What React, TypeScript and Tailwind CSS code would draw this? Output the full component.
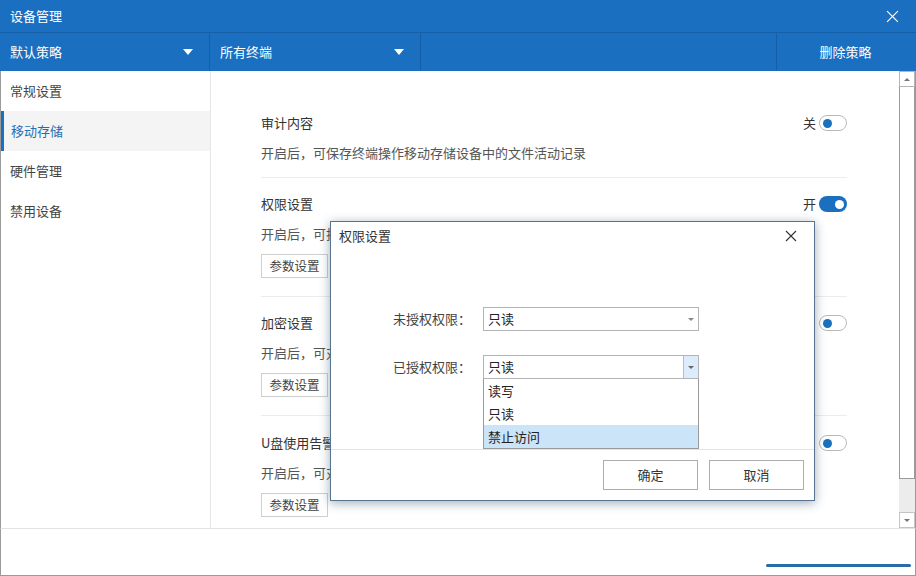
import React from "react";

const NAV = ["常规设置", "移动存储", "硬件管理", "禁用设备"];

const SECTIONS = [
  { title: "审计内容", desc: "开启后，可保存终端操作移动存储设备中的文件活动记录", on: false, label: "关", button: false },
  { title: "权限设置", desc: "开启后，可指定终端对移动存储设备的读写权限", on: true, label: "开", button: true },
  { title: "加密设置", desc: "开启后，可对移动存储设备中的文件进行加密", on: false, label: "", button: true },
  { title: "U盘使用告警", desc: "开启后，可对终端使用U盘的行为进行告警", on: false, label: "", button: true },
];

function Caret({ className }: { className?: string }) {
  return (
    <svg width="10" height="6" viewBox="0 0 10 6" className={className}>
      <path d="M0 0h10L5 6z" fill="currentColor" />
    </svg>
  );
}

function Cross({ size, className }: { size: number; className?: string }) {
  return (
    <svg width={size} height={size} viewBox="0 0 12 12" className={className}>
      <path d="M1 1l10 10M11 1L1 11" stroke="currentColor" strokeWidth="1.1" />
    </svg>
  );
}

function Toggle({ on }: { on: boolean }) {
  return on ? (
    <span className="flex h-[16px] w-[28px] items-center justify-end rounded-full bg-[#1a6fbf] pr-[3px]">
      <span className="h-[9px] w-[9px] rounded-full bg-white" />
    </span>
  ) : (
    <span className="flex h-[16px] w-[28px] items-center rounded-full border border-[#b9b9b9] bg-white pl-[3px]">
      <span className="h-[9px] w-[9px] rounded-full bg-[#1a6fbf]" />
    </span>
  );
}

function Select({ open }: { open?: boolean }) {
  return (
    <div className="flex h-[24px] w-[216px] items-center border border-[#b4b4b4] bg-white">
      <span className="flex-1 pl-[4px] text-[13px] text-[#222]">只读</span>
      {open ? (
        <span className="flex h-full w-[15px] items-center justify-center border-l border-[#9ec3e6] bg-[#dcecfc] text-[#666]">
          <svg width="6" height="3" viewBox="0 0 6 3"><path d="M0 0h6L3 3z" fill="currentColor" /></svg>
        </span>
      ) : (
        <span className="flex h-full w-[15px] items-center justify-center text-[#888]">
          <svg width="6" height="3" viewBox="0 0 6 3"><path d="M0 0h6L3 3z" fill="currentColor" /></svg>
        </span>
      )}
    </div>
  );
}

export default function App() {
  return (
    <div
      className="relative flex h-[576px] w-[916px] flex-col overflow-hidden bg-white text-[13px] text-[#333]"
      style={{ fontFamily: '"Noto Sans CJK SC", "Noto Sans", sans-serif' }}
    >
      {/* title bar */}
      <div className="flex h-[33px] items-center justify-between border-b border-[#155ea8] bg-[#1a6fc0] pl-[10px] pr-[17px] text-white">
        <span className="text-[13px]">设备管理</span>
        <Cross size={13} className="text-white" />
      </div>

      {/* toolbar */}
      <div className="flex h-[38px] items-center bg-[#1a6fc0] text-[13px] text-white">
        <div className="flex h-full w-[210px] items-center justify-between border-r border-[#155ea8] pl-[10px] pr-[16px]">
          <span>默认策略</span>
          <Caret className="text-white" />
        </div>
        <div className="flex h-full w-[211px] items-center justify-between border-r border-[#155ea8] pl-[10px] pr-[16px]">
          <span>所有终端</span>
          <Caret className="text-white" />
        </div>
        <div className="h-full w-[356px] border-r border-[#155ea8]" />
        <div className="flex h-full flex-1 items-center justify-center pr-[2px]">删除策略</div>
      </div>

      {/* body */}
      <div className="flex h-[457px] border-x border-[#9a9a9a]">
        <div className="w-[210px] border-r border-[#e6e6e6]">
          {NAV.map((n) => {
            const active = n === "移动存储";
            return (
              <div
                key={n}
                className={
                  active
                    ? "flex h-[40px] items-center border-l-[3px] border-[#1a6fbf] bg-[#f4f4f4] pb-[1px] pl-[7px] text-[#1f6fb5]"
                    : "flex h-[40px] items-center pb-[1px] pl-[9px] text-[#444]"
                }
              >
                {n}
              </div>
            );
          })}
        </div>

        <div className="flex-1 pl-[50px] pr-[52px] pt-[26px]">
          {SECTIONS.map((s, i) => (
            <div
              key={s.title}
              className={
                i === 0
                  ? "border-b border-[#ececec] pb-[14px] pt-[16px]"
                  : i === 3
                    ? "pt-[17px]"
                    : "border-b border-[#ececec] pb-[18px] pt-[16px]"
              }
            >
              <div className="flex h-[20px] items-center justify-between">
                <span className="text-[#333]">{s.title}</span>
                <span className="flex items-center gap-[3px]">
                  {s.label && <span className="text-[#333]">{s.label}</span>}
                  <Toggle on={s.on} />
                </span>
              </div>
              <div className="mt-[10px] flex h-[20px] items-center text-[#555]">{s.desc}</div>
              {s.button && (
                <div className="mt-[10px] flex h-[24px] w-[67px] items-center justify-center border border-[#cfcfcf] bg-white text-[12.5px] text-[#444]">
                  参数设置
                </div>
              )}
            </div>
          ))}
        </div>

        {/* scrollbar */}
        <div className="flex w-[16px] flex-col bg-white">
          <div className="flex h-[16px] items-center justify-center border border-[#b5b5b5] text-[#777]">
            <svg width="6" height="3" viewBox="0 0 6 3"><path d="M0 3h6L3 0z" fill="currentColor" /></svg>
          </div>
          <div className="h-[392px] border-x border-b border-[#9a9a9a] bg-white" />
          <div className="flex-1 bg-[#ececec]" />
          <div className="flex h-[16px] items-center justify-center border border-[#c4c4c4] text-[#777]">
            <svg width="6" height="3" viewBox="0 0 6 3"><path d="M0 0h6L3 3z" fill="currentColor" /></svg>
          </div>
        </div>
      </div>

      {/* footer */}
      <div className="flex flex-1 flex-col justify-end border-x border-b border-t border-[#9a9a9a] border-t-[#e3e3e3] pb-[8px] pr-[4px]">
        <div className="ml-auto h-[3px] w-[145px] rounded-sm bg-[#2a6ca8]" />
      </div>

      {/* dialog */}
      <div className="absolute left-[330px] top-[221px] flex h-[280px] w-[485px] flex-col border border-[#56738f] bg-white shadow-[0_2px_10px_rgba(40,70,100,0.45)]">
        <div className="flex h-[30px] items-center justify-between pb-[2px] pl-[8px] pr-[17px]">
          <span className="text-[13px] text-[#333]">权限设置</span>
          <Cross size={12} className="text-[#333]" />
        </div>
        <div className="relative flex-1 border-b border-[#e3e3e3]">
          <div className="absolute left-[62px] top-[55px] flex items-center gap-[12px]">
            <span className="w-[78px] whitespace-nowrap text-[#444]">未授权权限：</span>
            <Select />
          </div>
          <div className="absolute left-[62px] top-[103px] flex items-start gap-[12px]">
            <span className="flex h-[24px] w-[78px] items-center whitespace-nowrap text-[#444]">已授权权限：</span>
            <div className="flex flex-col">
              <Select open />
              <div className="flex w-[216px] flex-col border-x border-b border-[#9a9a9a] bg-white text-[#222]">
                <div className="flex h-[23px] items-center pl-[4px]">读写</div>
                <div className="flex h-[23px] items-center pl-[4px]">只读</div>
                <div className="flex h-[23px] items-center bg-[#cce4f7] pl-[4px]">禁止访问</div>
              </div>
            </div>
          </div>
        </div>
        <div className="flex h-[50px] items-start justify-end gap-[11px] pr-[10px] pt-[10px]">
          <div className="flex h-[30px] w-[95px] items-center justify-center border border-[#adadad] bg-white text-[#333]">确定</div>
          <div className="flex h-[30px] w-[95px] items-center justify-center border border-[#adadad] bg-white text-[#333]">取消</div>
        </div>
      </div>
    </div>
  );
}
